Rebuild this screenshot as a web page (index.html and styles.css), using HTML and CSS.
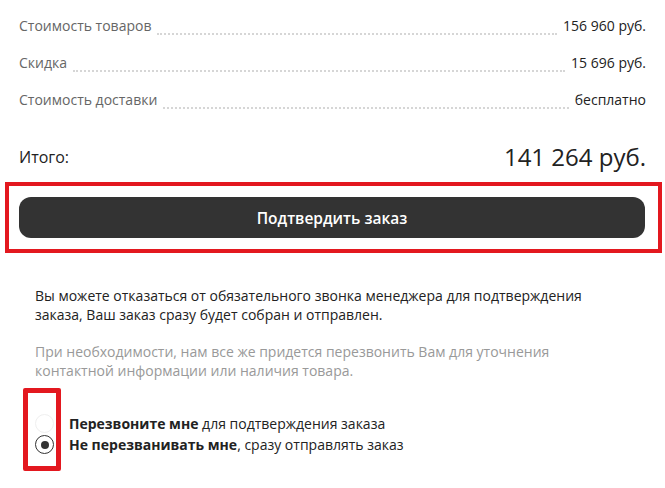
FILE: index.html
```html
<!DOCTYPE html>
<html lang="ru">
<head>
<meta charset="utf-8">
<title>Итого</title>
<link rel="stylesheet" href="styles.css">
</head>
<body>
<div class="page">
  <div class="summary">
    <div class="row">
      <span class="label">Стоимость товаров</span>
      <span class="leader"></span>
      <span class="value">156 960 руб.</span>
    </div>
    <div class="row">
      <span class="label">Скидка</span>
      <span class="leader"></span>
      <span class="value">15 696 руб.</span>
    </div>
    <div class="row">
      <span class="label">Стоимость доставки</span>
      <span class="leader"></span>
      <span class="value">бесплатно</span>
    </div>
  </div>
  <div class="total">
    <span class="total-label">Итого:</span>
    <span class="total-value">141 264 руб.</span>
  </div>
  <div class="highlight">
    <button class="confirm" type="button">Подтвердить заказ</button>
  </div>
  <div class="info">
    <p class="note">Вы можете отказаться от обязательного звонка менеджера для подтверждения заказа, Ваш заказ сразу будет собран и отправлен.</p>
    <p class="note muted">При необходимости, нам все же придется перезвонить Вам для уточнения контактной информации или наличия товара.</p>
  </div>
  <div class="choices">
    <label class="choice">
      <span class="radio"></span>
      <span class="choice-text"><b>Перезвоните мне</b> для подтверждения заказа</span>
    </label>
    <label class="choice">
      <span class="radio checked"></span>
      <span class="choice-text"><b>Не перезванивать мне</b>, сразу отправлять заказ</span>
    </label>
    <span class="mark"></span>
  </div>
</div>
</body>
</html>
```
FILE: styles.css
```css
* { box-sizing: border-box; }
html, body { margin: 0; padding: 0; background: #fff; }
body {
  font-family: "Open Sans", "Noto Sans", sans-serif;
  font-size: 14px;
  color: #222;
}
.page {
  width: 665px;
  padding: 16px 19px 33px 19px;
}
.summary {
  display: flex;
  flex-direction: column;
  gap: 17px;
}
.row {
  display: flex;
  align-items: flex-end;
  line-height: 20px;
  height: 20px;
}
.label { color: #666; white-space: nowrap; }
.value { color: #222; white-space: nowrap; }
.leader {
  flex: 1;
  height: 0;
  border-bottom: 2px dotted #d6d6d6;
  margin: 0 6px 1px 6px;
}
.total {
  display: flex;
  justify-content: space-between;
  align-items: center;
  margin-top: 31px;
  height: 32px;
}
.total-label { font-size: 16px; color: #222; }
.total-value { font-size: 24px; color: #222; line-height: 32px; }
.highlight {
  margin: 9px -16px 0 -14px;
  border: 4px solid #e3181f;
  padding: 11px 13px 11px 10px;
}
.confirm {
  display: block;
  width: 100%;
  height: 41px;
  border: 0;
  border-radius: 12px;
  background: #333333;
  color: #fff;
  font-family: "Open Sans", "Noto Sans", sans-serif;
  font-size: 15.5px;
  font-weight: 600;
}
.info {
  padding: 0 21px 0 16px;
  margin-top: 33px;
}
.note {
  margin: 0;
  line-height: 19px;
}
.note + .note { margin-top: 18px; }
.muted { color: #999; }
.choices {
  position: relative;
  margin-top: 34px;
  padding-left: 16px;
  display: flex;
  flex-direction: column;
  gap: 2px;
}
.choice {
  display: flex;
  align-items: center;
  gap: 15px;
  line-height: 19px;
}
.radio {
  width: 19px;
  height: 19px;
  border-radius: 50%;
  border: 1px solid #efefef;
  background: #fff;
  flex: none;
  display: flex;
  align-items: center;
  justify-content: center;
}
.radio.checked { border: 1.5px solid #333; }
.radio.checked::after {
  content: "";
  width: 8px;
  height: 8px;
  border-radius: 50%;
  background: #333;
}
.choice-text b { font-weight: 700; }
.mark {
  position: absolute;
  left: 4px;
  top: -26px;
  bottom: -17px;
  width: 38px;
  border: 5px solid #e3181f;
  border-radius: 2px;
  pointer-events: none;
}
```
